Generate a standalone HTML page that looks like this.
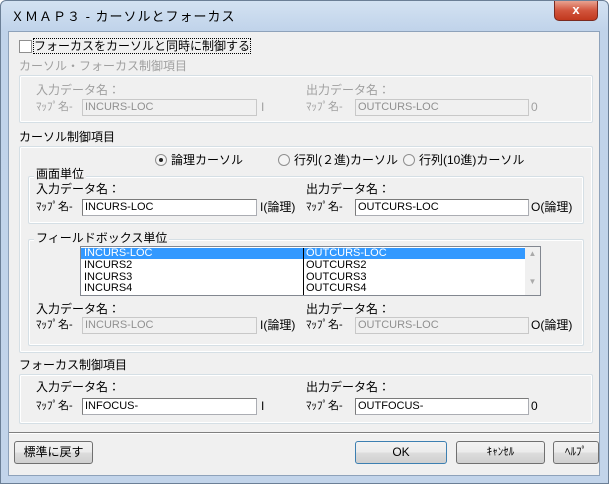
<!DOCTYPE html>
<html><head><meta charset="utf-8"><style>
*{box-sizing:border-box}
body{margin:0;width:609px;height:484px;overflow:hidden;background:#fff;font-family:"Liberation Sans","Noto Sans CJK JP",sans-serif;font-size:12px;color:#000}
.win{position:absolute;left:0;top:0;width:609px;height:484px;border:1px solid #6b7f96;border-radius:6px 6px 0 0;background:linear-gradient(#d3e2f2,#c0d3ea 30px,#c2d4ea);}
.client{position:absolute;left:8px;top:31px;width:592px;height:445px;background:#f0f0f0;border:1px solid #8ea2ba}
.t{position:absolute;white-space:nowrap;line-height:14px}
.g{color:#a0a0a0}
.box{position:absolute;border:1px solid #d5dfe5;border-radius:2px;box-shadow:inset 0 0 0 1px #fff}
.in{position:absolute;height:17px;background:#fff;border:1px solid #abadb3;border-top-color:#7a7a7a;border-left-color:#7a7a7a;font-size:11px;line-height:15px;padding-left:2px;font-family:"Liberation Sans Narrow","Liberation Sans",sans-serif}
.dis{background:#f0f0f0;color:#909090;border-color:#c8c8c8}
.btn{position:absolute;height:23px;border:1px solid #707070;border-radius:3px;background:linear-gradient(#f2f2f2,#ebebeb 50%,#dddddd 51%,#cfcfcf);text-align:center;line-height:21px;font-size:12px}
.lg{position:absolute;background:#f0f0f0;padding:0 2px;line-height:14px;white-space:nowrap}
.radio{position:absolute;width:12px;height:12px;border:1px solid #8f8f8f;border-radius:50%;background:#f4f4f4}
</style></head><body>
<div class="win">
<div class="t" style="left:10px;top:9px;font-size:13px;letter-spacing:1px">ＸＭＡＰ３ - カーソルとフォーカス</div>
<div style="position:absolute;left:553px;top:0;width:44px;height:20px;border:1px solid #7a2a20;border-top:none;border-radius:0 0 5px 5px;background:linear-gradient(#e8a290,#d2553d 50%,#c1381e);color:#fff;font-weight:bold;text-align:center;line-height:18px;font-size:13px">x</div>
</div>
<div class="client"></div>

<div style="position:absolute;left:19px;top:40px;width:13px;height:13px;border:1px solid #8f8f8f;background:#fff"></div>
<div class="t" style="left:34px;top:39px;outline:1px dotted #000">フォーカスをカーソルと同時に制御する</div>

<div class="t g" style="left:19px;top:59px">カーソル・フォーカス制御項目</div>
<div class="box" style="left:19px;top:75px;width:574px;height:48px"></div>
<div class="t g" style="left:36px;top:83px">入力データ名：</div>
<div class="t g" style="left:36px;top:100px;font-size:11px">ﾏｯﾌﾟ名-</div>
<div class="in dis" style="left:82px;top:99px;width:175px">INCURS-LOC</div>
<div class="t g" style="left:261px;top:100px">I</div>
<div class="t g" style="left:306px;top:83px">出力データ名：</div>
<div class="t g" style="left:306px;top:100px;font-size:11px">ﾏｯﾌﾟ名-</div>
<div class="in dis" style="left:355px;top:99px;width:174px">OUTCURS-LOC</div>
<div class="t g" style="left:531px;top:100px">0</div>

<div class="t" style="left:19px;top:130px">カーソル制御項目</div>
<div class="box" style="left:19px;top:146px;width:574px;height:207px"></div>
<div class="radio" style="left:155px;top:154px"><div style="position:absolute;left:3px;top:3px;width:4px;height:4px;border-radius:50%;background:#222"></div></div>
<div class="t" style="left:171px;top:153px">論理カーソル</div>
<div class="radio" style="left:278px;top:154px"></div>
<div class="t" style="left:294px;top:153px">行列(２進)カーソル</div>
<div class="radio" style="left:403px;top:154px"></div>
<div class="t" style="left:419px;top:153px">行列(10進)カーソル</div>

<div class="box" style="left:28px;top:176px;width:556px;height:48px"></div>
<div class="lg" style="left:34px;top:167px">画面単位</div>
<div class="t" style="left:36px;top:182px">入力データ名：</div>
<div class="t" style="left:36px;top:200px;font-size:11px">ﾏｯﾌﾟ名-</div>
<div class="in" style="left:82px;top:199px;width:175px">INCURS-LOC</div>
<div class="t" style="left:260px;top:200px">I(論理)</div>
<div class="t" style="left:306px;top:182px">出力データ名：</div>
<div class="t" style="left:306px;top:200px;font-size:11px">ﾏｯﾌﾟ名-</div>
<div class="in" style="left:355px;top:199px;width:174px">OUTCURS-LOC</div>
<div class="t" style="left:531px;top:200px">O(論理)</div>

<div class="box" style="left:28px;top:239px;width:556px;height:107px"></div>
<div class="lg" style="left:34px;top:231px">フィールドボックス単位</div>
<div style="position:absolute;left:80px;top:246px;width:461px;height:50px;background:#fff;border:1px solid #828790;font-size:11px;line-height:11.5px;font-family:'Liberation Sans Narrow','Liberation Sans',sans-serif">
<div style="position:absolute;left:0;top:1px;width:444px;height:11px;background:#3399ff"></div>
<div style="position:absolute;left:222px;top:1px;width:1px;height:47px;background:#000"></div>
<div style="position:absolute;left:3px;top:1px;color:#fff">INCURS-LOC</div>
<div style="position:absolute;left:225px;top:1px;color:#fff">OUTCURS-LOC</div>
<div style="position:absolute;left:3px;top:13px">INCURS2<br>INCURS3<br>INCURS4</div>
<div style="position:absolute;left:225px;top:13px">OUTCURS2<br>OUTCURS3<br>OUTCURS4</div>
<div style="position:absolute;right:0;top:0;width:15px;height:48px;background:#f0f0f0;color:#aaa;font-size:8px;text-align:center;line-height:14px">▲<br><br>▼</div>
</div>
<div class="t" style="left:36px;top:302px">入力データ名：</div>
<div class="t" style="left:36px;top:318px;font-size:11px">ﾏｯﾌﾟ名-</div>
<div class="in dis" style="left:82px;top:317px;width:175px">INCURS-LOC</div>
<div class="t" style="left:260px;top:318px">I(論理)</div>
<div class="t" style="left:306px;top:302px">出力データ名：</div>
<div class="t" style="left:306px;top:318px;font-size:11px">ﾏｯﾌﾟ名-</div>
<div class="in dis" style="left:355px;top:317px;width:174px">OUTCURS-LOC</div>
<div class="t" style="left:531px;top:318px">O(論理)</div>

<div class="t" style="left:19px;top:358px">フォーカス制御項目</div>
<div class="box" style="left:19px;top:374px;width:574px;height:50px"></div>
<div class="t" style="left:36px;top:380px">入力データ名：</div>
<div class="t" style="left:36px;top:399px;font-size:11px">ﾏｯﾌﾟ名-</div>
<div class="in" style="left:82px;top:398px;width:175px">INFOCUS-</div>
<div class="t" style="left:261px;top:399px">I</div>
<div class="t" style="left:306px;top:380px">出力データ名：</div>
<div class="t" style="left:306px;top:399px;font-size:11px">ﾏｯﾌﾟ名-</div>
<div class="in" style="left:355px;top:398px;width:174px">OUTFOCUS-</div>
<div class="t" style="left:531px;top:399px">0</div>

<div style="position:absolute;left:9px;top:432px;width:590px;height:2px;background:#808080;border-bottom:1px solid #fff"></div>
<div class="btn" style="left:14px;top:441px;width:79px">標準に戻す</div>
<div class="btn" style="left:355px;top:441px;width:92px;border-color:#3c7fb1">OK</div>
<div class="btn" style="left:456px;top:441px;width:89px;font-size:11px">ｷｬﾝｾﾙ</div>
<div class="btn" style="left:553px;top:441px;width:46px;font-size:11px">ﾍﾙﾌﾟ</div>
</body></html>
